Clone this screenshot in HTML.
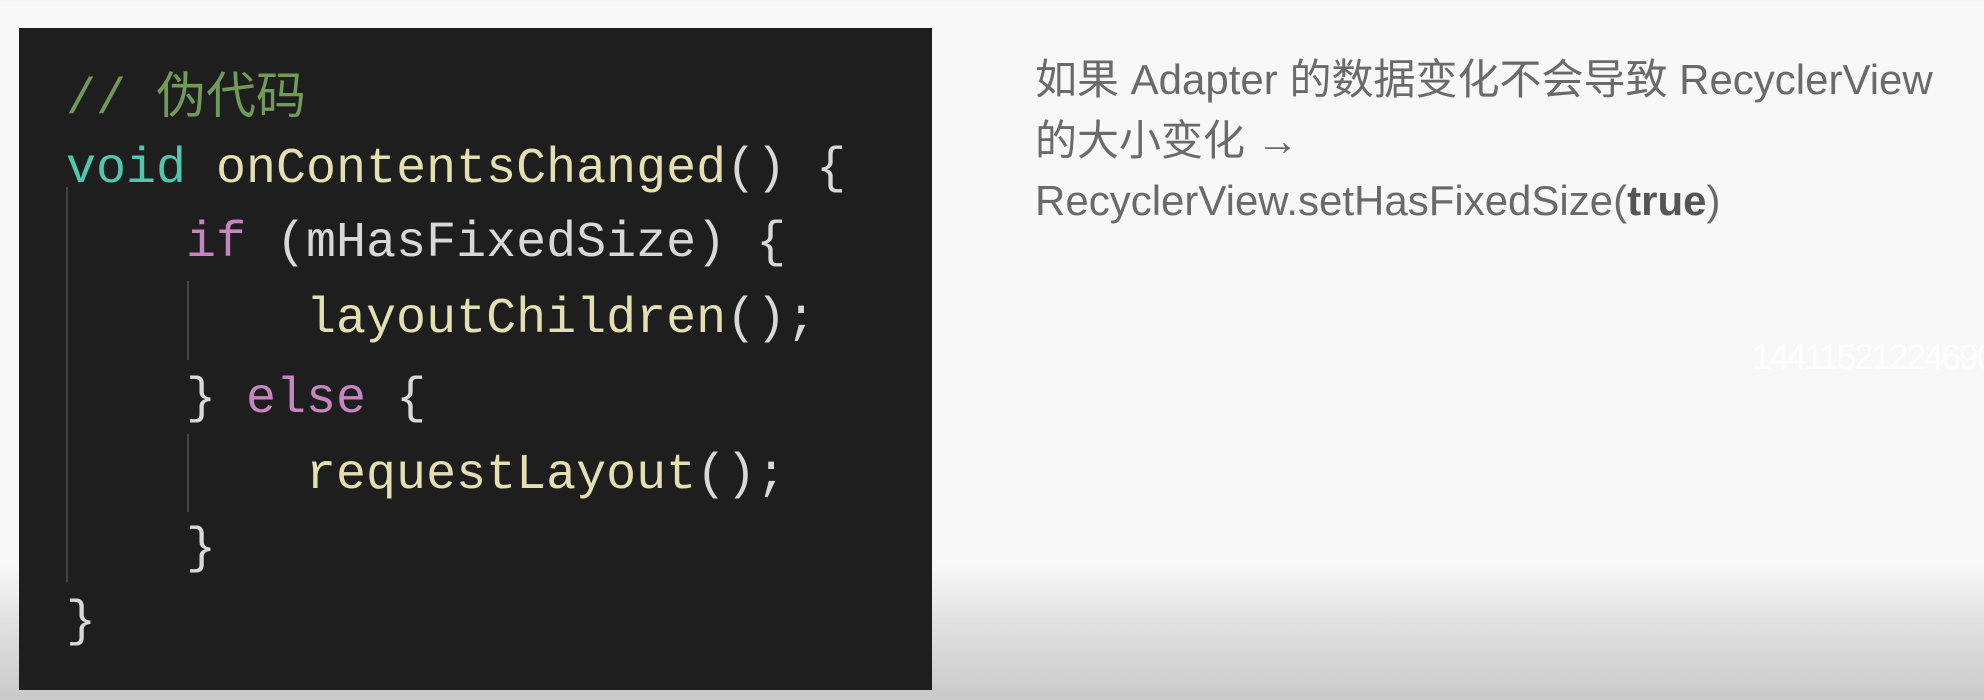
<!DOCTYPE html>
<html><head><meta charset="utf-8"><style>
html,body{margin:0;padding:0;}
body{width:1984px;height:700px;overflow:hidden;position:relative;
background:linear-gradient(to bottom,#f8f8f8 0px,#f8f8f8 565px,#e2e2e2 620px,#c9c9c9 700px);
font-family:"Liberation Sans","Noto Sans CJK SC",sans-serif;}
.code{position:absolute;left:19px;top:28px;width:913px;height:662px;background:#1f1e1f;}
.ln{position:absolute;left:47px;font-family:"Liberation Mono","Noto Sans CJK SC",monospace;font-size:50px;line-height:60px;color:#d8d8d8;white-space:pre;}
.g{position:absolute;width:2px;background:#444;}
.c{color:#6f9a57}.k{color:#4ec9b0}.f{color:#e2dfb0}.p{color:#c586c0}
.t{position:absolute;left:1035px;font-size:42px;color:#6a6a6a;white-space:nowrap;line-height:50px;}
.num{position:absolute;left:1752px;top:338px;font-size:35px;color:#fff;letter-spacing:-2px;white-space:nowrap;}
</style></head><body>
<div class="code">
<div class="g" style="left:47px;top:159px;height:395px"></div>
<div class="g" style="left:168px;top:253px;height:79px"></div>
<div class="g" style="left:168px;top:406px;height:78px"></div>
<div class="ln c" style="top:43px">// 伪代码</div>
<div class="ln" style="top:112px"><span class="k">void</span> <span class="f">onContentsChanged</span>() {</div>
<div class="ln" style="top:186px">    <span class="p">if</span> (mHasFixedSize) {</div>
<div class="ln" style="top:262px">        <span class="f">layoutChildren</span>();</div>
<div class="ln" style="top:342px">    } <span class="p">else</span> {</div>
<div class="ln" style="top:418px">        <span class="f">requestLayout</span>();</div>
<div class="ln" style="top:492px">    }</div>
<div class="ln" style="top:565px">}</div>
</div>
<div class="t" style="top:55px">如果 Adapter 的数据变化不会导致 RecyclerView</div>
<div class="t" style="top:116px">的大小变化 →</div>
<div class="t" style="top:176px">RecyclerView.setHasFixedSize(<b style="color:#555">true</b>)</div>
<div class="num">14411521224690</div>
</body></html>
